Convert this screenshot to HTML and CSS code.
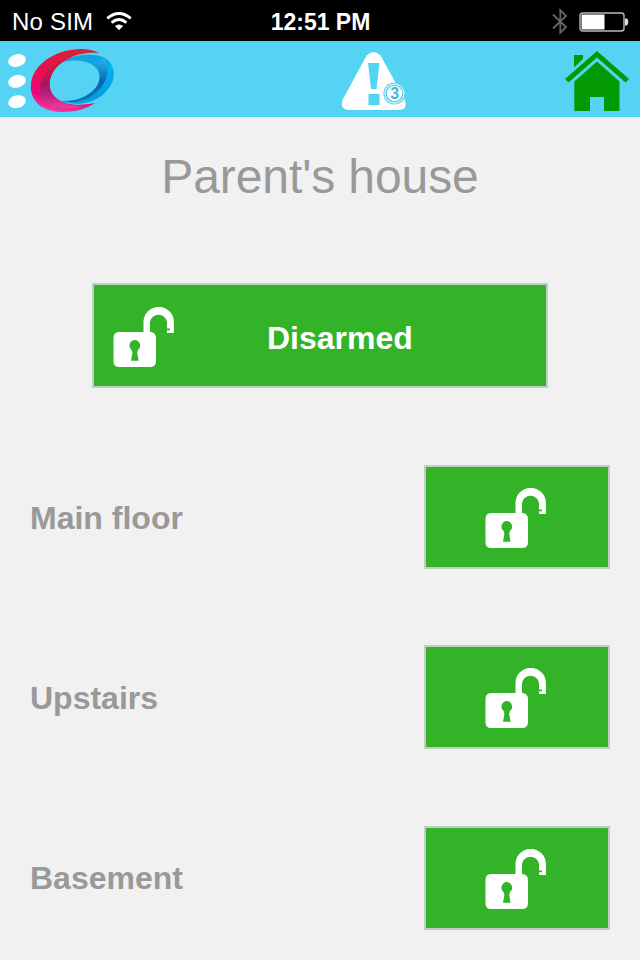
FILE: index.html
```html
<!DOCTYPE html>
<html lang="en">

<head>
    <meta charset="UTF-8">
    <meta name="viewport" content="width=device-width, initial-scale=1.0">
    <title>Parent's house</title>
    <link rel="stylesheet" href="styles.css">
</head>

<body>
    <!-- Shared padlock symbol -->
    <svg class="symbols" width="0" height="0">
        <symbol id="unlock" viewBox="0 0 61 60">
            <path fill="#fff" fill-rule="evenodd" d="M30.5 25V15A15.2 15.2 0 0 1 60.9 15V26H54V23.2H57V21.5H54V15A8.6 8.6 0 0 0 37 15V25H38Q43 26 43 31V54Q43 60 37 60H6Q0.5 60 0.5 54V31Q0.5 25 6 25ZM21.8 33A5.7 5.7 0 0 0 18.8 43.3L19.4 46L18 53.8H25.6L24.2 46L24.8 43.3A5.7 5.7 0 0 0 21.8 33Z"/>
        </symbol>
    </svg>

    <div class="status-bar">
        <div class="carrier">
            <span>No SIM</span>
            <svg class="wifi" width="26" height="19" viewBox="0 0 26 19">
                <g fill="none" stroke="#fff" stroke-width="2.9">
                    <path d="M1.3 6.4Q13 -3.4 24.7 6.4"/>
                    <path d="M5.6 10.6Q13 4.4 20.4 10.6"/>
                </g>
                <path fill="#fff" d="M8.9 14.1Q13 10.7 17.1 14.1L13 18.2Z"/>
            </svg>
        </div>
        <div class="time">12:51 PM</div>
        <div class="indicators">
            <svg width="16" height="27" viewBox="0 0 16 27">
                <path d="M1 6.5L14 19L8.3 24.8V2.2L14 8L1 20.5" fill="none" stroke="#666" stroke-width="1.8"/>
            </svg>
            <svg width="50" height="20" viewBox="0 0 50 20">
                <rect x="1" y="1" width="44" height="18" rx="2.5" fill="none" stroke="#bbb" stroke-width="1.4"/>
                <rect x="2.5" y="2.5" width="23" height="15" fill="#fff"/>
                <path d="M46 6.5H48Q49.3 7 49.3 10Q49.3 13 48 13.5H46Z" fill="#ddd"/>
            </svg>
        </div>
    </div>

    <div class="header">
        <svg class="logo" width="108" height="68" viewBox="6 47 108 68">
            <defs>
                <linearGradient id="red" x1="0.6" y1="0" x2="0.4" y2="1">
                    <stop offset="0" stop-color="#d92131"/>
                    <stop offset="0.5" stop-color="#eb0b55"/>
                    <stop offset="0.78" stop-color="#e9087a"/>
                    <stop offset="1" stop-color="#ee3f9c"/>
                </linearGradient>
                <linearGradient id="pink" x1="0.5" y1="0" x2="0.5" y2="1">
                    <stop offset="0" stop-color="#d71935"/>
                    <stop offset="0.5" stop-color="#a51562"/>
                    <stop offset="0.75" stop-color="#bd2483"/>
                    <stop offset="1" stop-color="#ee3f9c"/>
                </linearGradient>
                <linearGradient id="blue" x1="0.2" y1="0" x2="0.6" y2="1">
                    <stop offset="0" stop-color="#199bd7"/>
                    <stop offset="0.5" stop-color="#00b5ef"/>
                    <stop offset="1" stop-color="#0798da"/>
                </linearGradient>
                <linearGradient id="navy" x1="0.5" y1="0" x2="0.4" y2="1">
                    <stop offset="0" stop-color="#29b0e8"/>
                    <stop offset="0.5" stop-color="#0864ad"/>
                    <stop offset="1" stop-color="#0a79bd"/>
                </linearGradient>
            </defs>
            <g fill="#fff">
                <ellipse cx="17" cy="60.5" rx="9" ry="6.3" transform="rotate(-14 17 60.5)"/>
                <ellipse cx="17" cy="81.3" rx="9" ry="6.3" transform="rotate(-14 17 81.3)"/>
                <ellipse cx="17" cy="101.7" rx="9" ry="6.3" transform="rotate(-14 17 101.7)"/>
            </g>
            <path fill="url(#blue)" d="M62 62C73 54 93 53 103 57C116 63 117 79 108 89C98 103 77 107 62 101C77 102 91 96 97 86C107 68 87 56 62 62Z"/>
            <path fill="url(#navy)" d="M104 58C109 65 109 77 102 86C94 98 78 105 62 101C77 102 91 95 97 86C102 77 100 69 94 65Z"/>
            <path fill="url(#red)" d="M99 53C87 46 62 48 46 60C30 71 26 91 37 103C48 116 80 114 95 103C80 106 63 106 54 96C45 87 50 70 63 62C74 54 87 52 99 53Z"/>
            <path fill="url(#pink)" d="M64 61C51 64 40 77 40 90C41 106 62 112 84 106C71 107 59 103 54 96C45 85 51 69 64 61Z"/>
        </svg>

        <svg class="alerts" width="66" height="60" viewBox="341 51 66 60">
            <path fill="#fff" d="M366.6 55.5Q373.6 48.5 380.6 55.5L405 100Q408 109.5 399 110H349Q339.5 109.5 342.5 100Z"/>
            <path fill="#54d3f3" d="M368 63H379.5L376.5 89H371ZM368.5 94H379.5V105H368.5Z"/>
            <circle cx="394.5" cy="93.5" r="11.1" fill="#54d3f3"/>
            <circle cx="394.5" cy="93.5" r="10" fill="#fff"/>
            <circle cx="394.5" cy="93.5" r="8.4" fill="#fff" stroke="#54c8e8" stroke-width="1.3"/>
            <text class="alert-count" x="394.6" y="99.3">3</text>
        </svg>

        <svg class="home" width="64" height="61" viewBox="565 51 64 61">
            <g fill="#049a04">
                <path d="M574 55H583V59L574 67.5Z"/>
                <path d="M597 51L629 79L625.5 82.5L597 57.5L568.5 82.5L565 79Z"/>
                <path d="M597 61.5L619.5 81.5V111H604V97H590V111H574.3V81.5Z"/>
            </g>
        </svg>
    </div>

    <div class="content">
        <h1 class="title">Parent's house</h1>

        <button class="button main-button">
            <svg class="lock" width="61" height="60"><use href="#unlock"/></svg>
            <span>Disarmed</span>
        </button>

        <div class="zones">
            <div class="zone">
                <span>Main floor</span>
                <button class="button"><svg class="lock" width="61" height="60"><use href="#unlock"/></svg></button>
            </div>
            <div class="zone">
                <span>Upstairs</span>
                <button class="button"><svg class="lock" width="61" height="60"><use href="#unlock"/></svg></button>
            </div>
            <div class="zone">
                <span>Basement</span>
                <button class="button"><svg class="lock" width="61" height="60"><use href="#unlock"/></svg></button>
            </div>
        </div>
    </div>
</body>

</html>
```

FILE: styles.css
```css
* {
    box-sizing: border-box;
}

body {
    margin: 0;
    height: 960px;
    overflow: hidden;
    background-color: #f1f1f1;
    font-family: "Liberation Sans", Arial, sans-serif;
}

svg {
    display: block;
    flex: none;
}

.symbols {
    display: none;
}

/* Status bar */
.status-bar {
    display: grid;
    grid-template-columns: 1fr auto 1fr;
    align-items: center;
    height: 41px;
    padding: 2px 11px 0 12px;
    background-color: #000;
    color: #fff;
    font-size: 24px;
    line-height: 39px;
}

.carrier {
    display: flex;
    align-items: center;
    gap: 13px;
    letter-spacing: 0.2px;
}

.wifi {
    margin-bottom: 1px;
}

.time {
    padding-top: 2px;
    font-size: 23px;
    font-weight: bold;
    line-height: 37px;
}

.indicators {
    display: flex;
    justify-content: flex-end;
    align-items: center;
    gap: 11px;
}

/* Header */
.header {
    display: grid;
    grid-template-columns: 335px auto 1fr;
    height: 76px;
    padding: 6px 11px 0 6px;
    background-color: #54d3f3;
}

.alerts {
    margin-top: 4px;
}

.alert-count {
    fill: #3fb9df;
    font-size: 16px;
    font-weight: bold;
    text-anchor: middle;
}

.home {
    justify-self: end;
    margin-top: 4px;
}

/* Content */
.content {
    display: flex;
    flex-direction: column;
    align-items: center;
}

.title {
    margin: 32px 0 78px;
    color: #999;
    font-size: 48px;
    font-weight: normal;
    line-height: 56px;
    letter-spacing: -0.1px;
}

.button {
    display: flex;
    align-items: center;
    justify-content: center;
    width: 186px;
    height: 104px;
    padding: 2px 3px 0 0;
    border: 2px solid #c3ccc2;
    background-color: #33b327;
    color: #fff;
    font-family: inherit;
    font-size: 32px;
    font-weight: bold;
    cursor: pointer;
}

.main-button {
    justify-content: flex-start;
    gap: 93px;
    width: 456px;
    height: 105px;
    padding: 3px 0 0 19px;
}

.main-button span {
    margin-top: 3px;
}

.zones {
    display: flex;
    flex-direction: column;
    gap: 76.4px;
    width: 100%;
    margin-top: 77px;
    padding: 0 30px;
}

.zone {
    display: flex;
    align-items: center;
    justify-content: space-between;
    color: #999;
    font-size: 32px;
    font-weight: bold;
}

.zone span {
    padding-top: 2px;
}
```
